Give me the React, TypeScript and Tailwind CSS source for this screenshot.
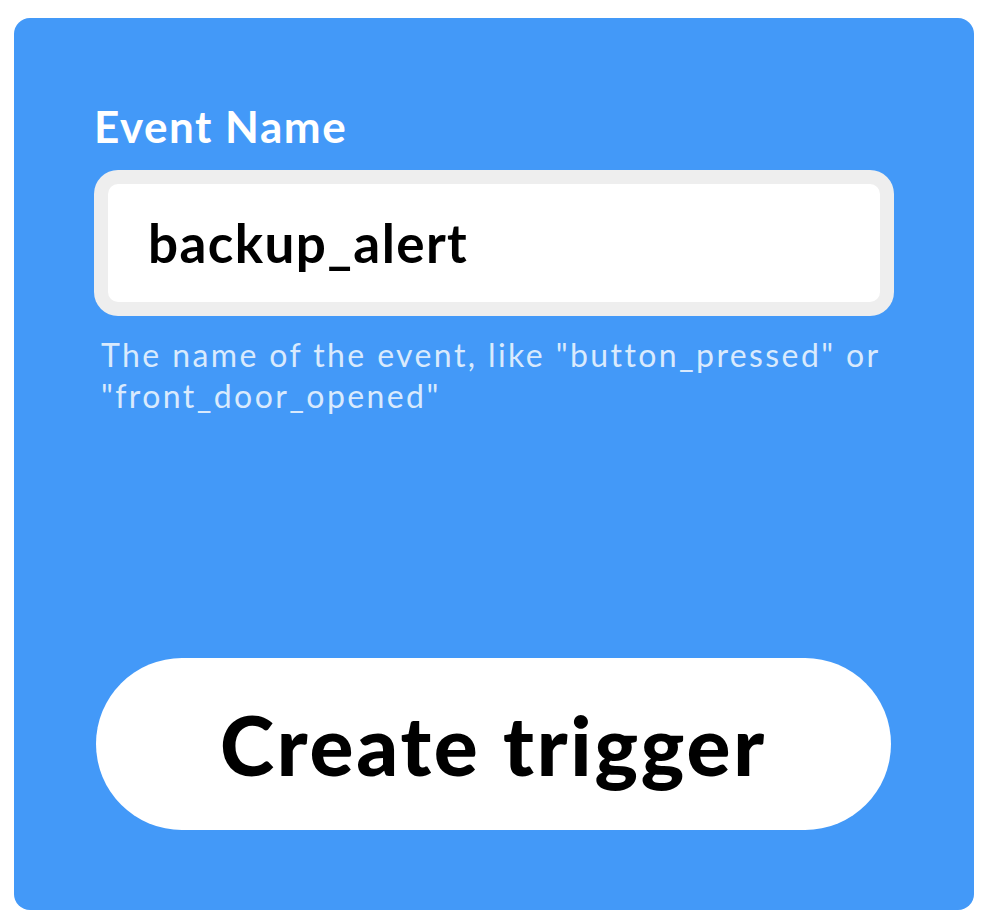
export default function App() {
  return (
    <div className="min-h-screen bg-white pt-[18px] px-[14px]" style={{ fontFamily: 'Lato, "Noto Sans", sans-serif' }}>
      <div className="flex h-[892px] w-[960px] flex-col rounded-[16px] bg-[#4399f8] px-[80px] pt-[82px] pb-[80px]">
        <label className="text-[44px] font-bold leading-[52px] tracking-[1.5px] text-white">Event Name</label>

        <div className="mt-[18px] rounded-[24px] bg-[#eeeeee] p-[14px]">
          <div className="flex h-[118px] items-center rounded-[10px] bg-white px-[40px]">
            <span className="text-[53px] font-bold tracking-[1.4px] text-black">backup_alert</span>
          </div>
        </div>

        <p className="mt-[18px] pl-[7px] pr-[2px] text-[32px] leading-[41px] tracking-[2.4px] text-[#d9eafd]">
          The name of the event, like "button_pressed" or "front_door_opened"
        </p>

        <button className="mt-auto ml-[2px] flex h-[172px] w-[795px] items-center justify-center self-start rounded-full bg-white">
          <span className="text-[82px] font-black tracking-[2.8px] text-black">Create trigger</span>
        </button>
      </div>
    </div>
  )
}
